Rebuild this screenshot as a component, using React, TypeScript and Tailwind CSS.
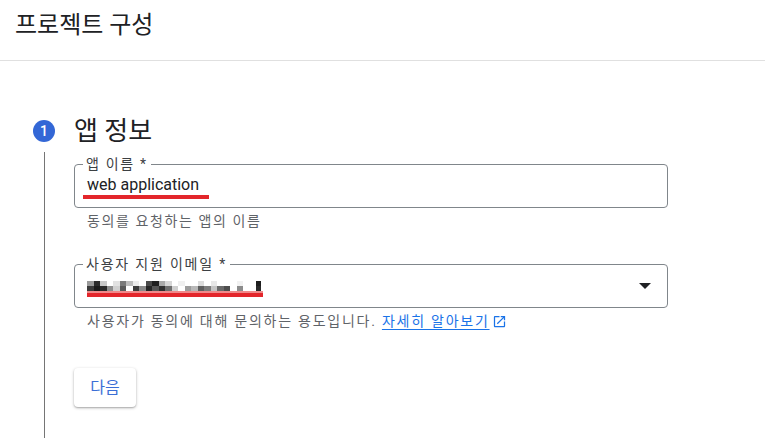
import React from 'react';

const top = [
  ['w-[7px]', 'bg-[#9a9a9a]'], ['w-[6px]', 'bg-[#2b2b2b]'], ['w-[7px]', 'bg-[#c8c8c8]'], ['w-[6px]', 'bg-[#ffffff]'],
  ['w-[7px]', 'bg-[#e2e2e2]'], ['w-[6px]', 'bg-[#7a7a7a]'], ['w-[7px]', 'bg-[#bdbdbd]'], ['w-[6px]', 'bg-[#ececec]'],
  ['w-[7px]', 'bg-[#ffffff]'], ['w-[6px]', 'bg-[#4a4a4a]'], ['w-[7px]', 'bg-[#202020]'], ['w-[6px]', 'bg-[#a8a8a8]'],
  ['w-[7px]', 'bg-[#d6d6d6]'], ['w-[6px]', 'bg-[#ffffff]'], ['w-[7px]', 'bg-[#f0f0f0]'], ['w-[6px]', 'bg-[#ffffff]'],
  ['w-[7px]', 'bg-[#ffffff]'], ['w-[6px]', 'bg-[#dcdcdc]'], ['w-[7px]', 'bg-[#ffffff]'], ['w-[6px]', 'bg-[#e8e8e8]'],
  ['w-[7px]', 'bg-[#ffffff]'], ['w-[6px]', 'bg-[#ffffff]'], ['w-[7px]', 'bg-[#ffffff]'], ['w-[6px]', 'bg-[#f2f2f2]'],
  ['w-[7px]', 'bg-[#ffffff]'], ['w-[6px]', 'bg-[#ffffff]'], ['w-[5px]', 'bg-[#1e1e1e]'],
];

const bottom = [
  ['w-[7px]', 'bg-[#3a3a3a]'], ['w-[6px]', 'bg-[#1a1a1a]'], ['w-[7px]', 'bg-[#2a2a2a]'], ['w-[6px]', 'bg-[#8e8e8e]'],
  ['w-[7px]', 'bg-[#d0d0d0]'], ['w-[6px]', 'bg-[#5a5a5a]'], ['w-[7px]', 'bg-[#ffffff]'], ['w-[6px]', 'bg-[#3c3c3c]'],
  ['w-[7px]', 'bg-[#8a8a8a]'], ['w-[6px]', 'bg-[#262626]'], ['w-[7px]', 'bg-[#555555]'], ['w-[6px]', 'bg-[#2f2f2f]'],
  ['w-[7px]', 'bg-[#6e6e6e]'], ['w-[6px]', 'bg-[#cfcfcf]'], ['w-[7px]', 'bg-[#ffffff]'], ['w-[6px]', 'bg-[#9c9c9c]'],
  ['w-[7px]', 'bg-[#b8b8b8]'], ['w-[6px]', 'bg-[#5e5e5e]'], ['w-[7px]', 'bg-[#7c7c7c]'], ['w-[6px]', 'bg-[#c4c4c4]'],
  ['w-[7px]', 'bg-[#6a6a6a]'], ['w-[6px]', 'bg-[#4e4e4e]'], ['w-[7px]', 'bg-[#ffffff]'], ['w-[6px]', 'bg-[#8c8c8c]'],
  ['w-[7px]', 'bg-[#ffffff]'], ['w-[6px]', 'bg-[#ffffff]'], ['w-[5px]', 'bg-[#2a2a2a]'],
];

// pixelated (redacted) email address
function Redacted() {
  return (
    <div className="flex flex-col">
      <div className="flex h-[5px]">
        {top.map(([w, c], i) => (
          <span key={i} className={`${w} ${c}`} />
        ))}
      </div>
      <div className="flex h-[5px]">
        {bottom.map(([w, c], i) => (
          <span key={i} className={`${w} ${c}`} />
        ))}
      </div>
    </div>
  );
}

export default function App() {
  return (
    <div className="w-[765px] h-[447px] overflow-hidden bg-white text-[#202124] font-['Roboto','Noto_Sans_CJK_KR',sans-serif]">
      <header className="h-[61px] border-b border-[#e0e0e0] pl-[15px] pt-[10px]">
        <h1 className="text-[24px] leading-[30px]">프로젝트 구성</h1>
      </header>

      <section className="pt-[59px]">
        <div className="flex items-center h-[22px] pl-[33px] gap-[19px]">
          <div className="w-[22px] h-[22px] rounded-full bg-[#3367d6] text-white text-[14px] font-medium flex items-center justify-center">
            1
          </div>
          <h2 className="text-[26px] leading-[30px]">앱 정보</h2>
        </div>

        <div className="flex mt-[10px] h-[286px] pl-[33px]">
          <div className="w-[22px] flex justify-center shrink-0">
            <div className="w-px h-full bg-[#757575]" />
          </div>

          <div className="ml-[19px] w-[594px] pt-[4px]">
            <fieldset className="h-[52px] border border-[#80868b] rounded-[4px] px-[8px]">
              <legend className="px-[3px] text-[14px] leading-[16px] tracking-[1.7px] text-[#3c4043]">앱 이름 *</legend>
              <div className="mt-[3px] pl-[4px] text-[16px] leading-[20px]">web application</div>
              <div className="h-[4px] w-[126px] bg-[#e3262b]" />
            </fieldset>
            <p className="mt-[4px] pl-[13px] text-[14px] leading-[18px] tracking-[1.6px] text-[#5f6368]">동의를 요청하는 앱의 이름</p>

            <fieldset className="mt-[26px] h-[52px] border border-[#80868b] rounded-[4px] px-[8px]">
              <legend className="px-[3px] text-[14px] leading-[16px] tracking-[1.8px] text-[#3c4043]">사용자 지원 이메일 *</legend>
              <div className="flex items-start justify-between">
                <div className="mt-[9px] pl-[4px]">
                  <Redacted />
                  <div className="h-[2px] w-[176px] bg-[#f08a8a]" />
                  <div className="h-[4px] w-[176px] bg-[#e3262b]" />
                </div>
                <svg width="12" height="6" viewBox="0 0 12 6" className="mt-[11px] mr-[8px]">
                  <path d="M0 0h12L6 6z" fill="#202124" />
                </svg>
              </div>
            </fieldset>
            <p className="mt-[4px] pl-[13px] text-[14px] leading-[18px] tracking-[1.75px] text-[#5f6368] flex items-center">
              사용자가 동의에 대해 문의하는 용도입니다.&nbsp;
              <a className="text-[#1a73e8] underline underline-offset-[3px] decoration-[#1a73e8]">자세히 알아보기</a>
              <svg width="15" height="15" viewBox="0 0 24 24" className="ml-[2px]">
                <path
                  fill="#1a73e8"
                  d="M19 19H5V5h7V3H5c-1.11 0-2 .9-2 2v14c0 1.1.89 2 2 2h14c1.1 0 2-.9 2-2v-7h-2v7zM14 3v2h3.59l-9.83 9.83 1.41 1.41L19 6.41V10h2V3h-7z"
                />
              </svg>
            </p>

            <button className="mt-[38px] w-[62px] h-[39px] rounded-[4px] bg-white text-[#3b6fd6] text-[16px] shadow-[0_1px_3px_rgba(0,0,0,0.3),0_1px_1px_rgba(0,0,0,0.1)]">
              다음
            </button>
          </div>
        </div>
      </section>
    </div>
  );
}
